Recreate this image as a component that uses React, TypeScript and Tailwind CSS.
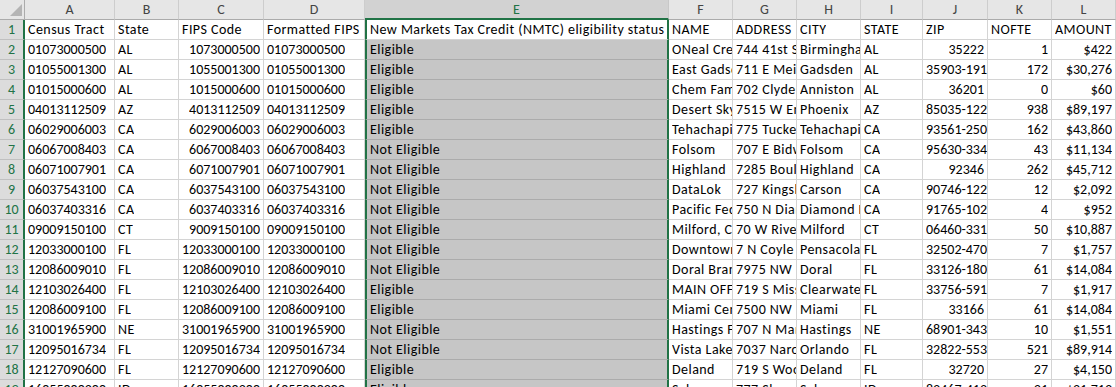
import React from "react";

type Cell = { v: string; r?: boolean };

const cols = ["A", "B", "C", "D", "E", "F", "G", "H", "I", "J", "K", "L"];

const raw: string[][] = [
  ["Census Tract", "State", "FIPS Code", "Formatted FIPS", "New Markets Tax Credit (NMTC) eligibility status", "NAME", "ADDRESS", "CITY", "STATE", "ZIP", "NOFTE", "AMOUNT"],
  ["01073000500", "AL", "#1073000500", "01073000500", "Eligible", "ONeal Creek", "744 41st St", "Birmingham", "AL", "#35222", "#1", "#$422"],
  ["01055001300", "AL", "#1055001300", "01055001300", "Eligible", "East Gadsden", "711 E Meighan", "Gadsden", "AL", "35903-191", "#172", "#$30,276"],
  ["01015000600", "AL", "#1015000600", "01015000600", "Eligible", "Chem Family", "702 Clydesdale", "Anniston", "AL", "#36201", "#0", "#$60"],
  ["04013112509", "AZ", "#4013112509", "04013112509", "Eligible", "Desert Sky", "7515 W Encanto", "Phoenix", "AZ", "85035-122", "#938", "#$89,197"],
  ["06029006003", "CA", "#6029006003", "06029006003", "Eligible", "Tehachapi", "775 Tucker Rd", "Tehachapi", "CA", "93561-250", "#162", "#$43,860"],
  ["06067008403", "CA", "#6067008403", "06067008403", "Not Eligible", "Folsom", "707 E Bidwell", "Folsom", "CA", "95630-334", "#43", "#$11,134"],
  ["06071007901", "CA", "#6071007901", "06071007901", "Not Eligible", "Highland", "7285 Boulder", "Highland", "CA", "#92346", "#262", "#$45,712"],
  ["06037543100", "CA", "#6037543100", "06037543100", "Not Eligible", "DataLok", "727 Kingshill", "Carson", "CA", "90746-122", "#12", "#$2,092"],
  ["06037403316", "CA", "#6037403316", "06037403316", "Not Eligible", "Pacific Federal", "750 N Diamond", "Diamond Bar", "CA", "91765-102", "#4", "#$952"],
  ["09009150100", "CT", "#9009150100", "09009150100", "Not Eligible", "Milford, CT", "70 W River St", "Milford", "CT", "06460-331", "#50", "#$10,887"],
  ["12033000100", "FL", "#12033000100", "12033000100", "Not Eligible", "Downtown", "7 N Coyle St", "Pensacola", "FL", "32502-470", "#7", "#$1,757"],
  ["12086009010", "FL", "#12086009010", "12086009010", "Not Eligible", "Doral Branch", "7975 NW 12th", "Doral", "FL", "33126-180", "#61", "#$14,084"],
  ["12103026400", "FL", "#12103026400", "12103026400", "Eligible", "MAIN OFFICE", "719 S Missouri", "Clearwater", "FL", "33756-591", "#7", "#$1,917"],
  ["12086009100", "FL", "#12086009100", "12086009100", "Eligible", "Miami Central", "7500 NW 52nd", "Miami", "FL", "#33166", "#61", "#$14,084"],
  ["31001965900", "NE", "#31001965900", "31001965900", "Not Eligible", "Hastings Fed", "707 N Marian", "Hastings", "NE", "68901-343", "#10", "#$1,551"],
  ["12095016734", "FL", "#12095016734", "12095016734", "Not Eligible", "Vista Lake", "7037 Narcoossee", "Orlando", "FL", "32822-553", "#521", "#$89,914"],
  ["12127090600", "FL", "#12127090600", "12127090600", "Eligible", "Deland", "719 S Woodland", "Deland", "FL", "#32720", "#27", "#$4,150"],
  ["16055000200", "ID", "#16055000200", "16055000200", "Eligible", "Salmon", "777 Shoup St", "Salmon", "ID", "83467-412", "#31", "#$21,713"],
];

const rows: Cell[][] = raw.map((r) =>
  r.map((v) => (v.startsWith("#") ? { v: v.slice(1), r: true } : { v }))
);

const font = { fontFamily: "Carlito, Calibri, 'Liberation Sans', sans-serif" };

const isNum = (s: string) => /^[\d$,\-]+$/.test(s);

export default function App() {
  return (
    <div
      className="w-[1116px] h-[387px] overflow-hidden bg-white text-[14px] text-black leading-none"
      style={font}
    >
      <div className="grid grid-cols-[25px_90px_64px_85px_101px_304px_64px_64px_64px_62px_65px_64px_1fr] auto-rows-[20px]">
        <div className="bg-[#e6e6e6] border-r border-b border-[#ababab] flex items-end justify-end pr-[2px] pb-[3px]">
          <svg width="12" height="12" viewBox="0 0 12 12">
            <polygon points="12,0 12,12 0,12" fill="#b4b4b4" />
          </svg>
        </div>
        {cols.map((c) =>
          c === "E" ? (
            <div
              key={c}
              className="bg-[#d2d2d2] border-r border-[#c8c8c8] border-b-2 border-b-[#217346] text-[#217346] flex items-center justify-center pt-[1px]"
            >
              {c}
            </div>
          ) : (
            <div
              key={c}
              className="bg-[#e6e6e6] border-r border-[#cdcdcd] border-b border-b-[#ababab] text-[#444444] flex items-center justify-center"
            >
              {c}
            </div>
          )
        )}
        {rows.map((row, i) => (
          <React.Fragment key={i}>
            <div className="bg-[#dcdcdc] border-b border-[#c0c0c0] border-r-2 border-r-[#217346] text-[#217346] flex items-center justify-center">
              {i + 1}
            </div>
            {row.map((cell, j) => {
              const isE = j === 4;
              const track = isNum(cell.v) ? "tracking-normal" : "tracking-[0.45px]";
              const base = `overflow-hidden whitespace-nowrap flex items-center ${track}`;
              const align = cell.r ? "justify-end pr-[3px]" : "justify-start pl-[3px]";
              if (isE) {
                return (
                  <div
                    key={j}
                    className={`${base} ${align} border-l-2 border-r-2 border-[#217346] border-b ${
                      i === 0 ? "bg-white border-b-[#d4d4d4]" : "bg-[#c6c6c6] border-b-[#ababab]"
                    }`}
                  >
                    {cell.v}
                  </div>
                );
              }
              return (
                <div
                  key={j}
                  className={`${base} ${align} border-r border-b border-[#d4d4d4] bg-white`}
                >
                  <span className="block overflow-hidden">{cell.v}</span>
                </div>
              );
            })}
          </React.Fragment>
        ))}
      </div>
    </div>
  );
}
